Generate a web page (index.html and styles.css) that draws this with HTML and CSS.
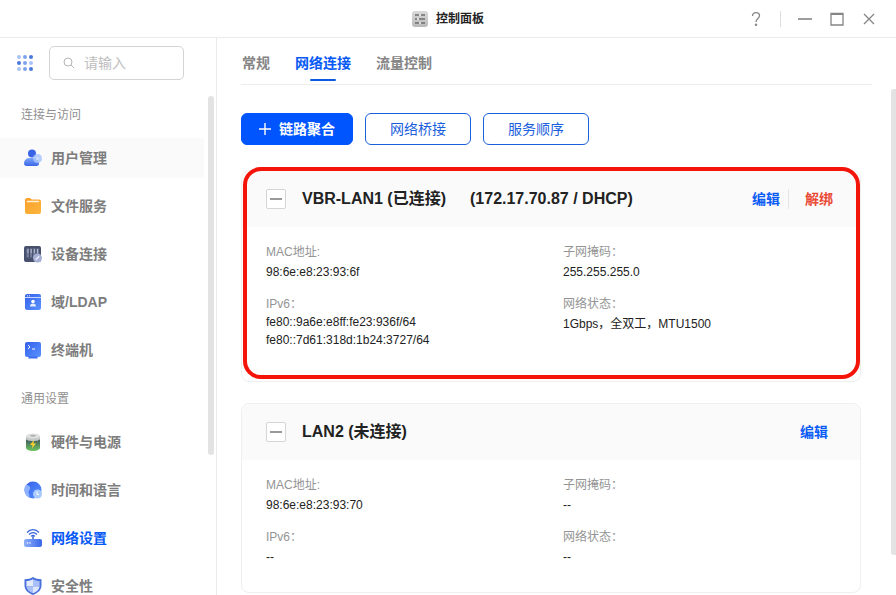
FILE: index.html
```html
<!DOCTYPE html>
<html lang="zh-CN">
<head>
    <meta charset="UTF-8">
    <meta name="viewport" content="width=device-width, initial-scale=1.0">
    <title>控制面板</title>
    <link rel="stylesheet" href="styles.css">
</head>
<body>
    <!-- Shared gradients for the sidebar icons -->
    <svg class="defs" width="0" height="0" aria-hidden="true">
        <defs>
            <linearGradient id="blue" x1="0" y1="0" x2="1" y2="1">
                <stop offset="0" stop-color="#3460ea"/>
                <stop offset="1" stop-color="#5b93ff"/>
            </linearGradient>
            <linearGradient id="blueSoft" x1="0" y1="0" x2="1" y2="0">
                <stop offset="0" stop-color="#8fb0fb"/>
                <stop offset="1" stop-color="#3a66e8"/>
            </linearGradient>
            <linearGradient id="userBody" x1="0" y1="0" x2="0" y2="1">
                <stop offset="0" stop-color="#7ea6fb"/>
                <stop offset="1" stop-color="#3a66e8"/>
            </linearGradient>
            <linearGradient id="orange" x1="0" y1="0" x2="1" y2="1">
                <stop offset="0" stop-color="#fba12c"/>
                <stop offset="1" stop-color="#fbb53c"/>
            </linearGradient>
            <linearGradient id="green" x1="0" y1="0" x2="0" y2="1">
                <stop offset="0.3" stop-color="#47625f"/>
                <stop offset="1" stop-color="#6cc860"/>
            </linearGradient>
            <linearGradient id="grey" x1="0" y1="0" x2="0" y2="1">
                <stop offset="0" stop-color="#dadada"/>
                <stop offset="1" stop-color="#b9b9b9"/>
            </linearGradient>
        </defs>
    </svg>

    <div class="window">
        <header class="titlebar">
            <div class="title">
                <svg width="16" height="16" viewBox="0 0 16 16" aria-hidden="true">
                    <rect width="16" height="16" rx="3" fill="url(#grey)"/>
                    <path d="M3 4h4M9 4h4M3 8h2M7 8h6M3 12h4M9 12h4" stroke="#6e6e6e" stroke-width="1.4"/>
                    <path d="M8 3v2M6 7v2M8 11v2" stroke="#f2f2f2" stroke-width="1"/>
                </svg>
                <h1>控制面板</h1>
            </div>
            <div class="window-buttons">
                <button type="button" class="win-btn help" aria-label="帮助">
                    <svg width="16" height="16" viewBox="0 0 16 16"><path d="M4.500 5C4.500 2.800 6 1.700 8 1.700s3.500 1.200 3.500 3.100C11.500 7.400 8 7.600 8 11"/><circle cx="8" cy="13.700" r=".6"/></svg>
                </button>
                <button type="button" class="win-btn" aria-label="最小化">
                    <svg width="16" height="16" viewBox="0 0 16 16"><path d="M1 8h14" stroke-width="1.600"/></svg>
                </button>
                <button type="button" class="win-btn" aria-label="最大化">
                    <svg width="16" height="16" viewBox="0 0 16 16"><path d="M2 2.500h12v11.500H2z"/><path d="M2 3h12" stroke-width="2"/></svg>
                </button>
                <button type="button" class="win-btn" aria-label="关闭">
                    <svg width="16" height="16" viewBox="0 0 16 16"><path d="M3 3l10 10M13 3L3 13"/></svg>
                </button>
            </div>
        </header>

        <div class="content">
            <aside class="sidebar">
                <div class="search-row">
                    <button type="button" class="apps" aria-label="全部应用">
                        <svg width="18" height="18" viewBox="0 0 18 18">
                            <g fill="#4b79dc"><circle cx="15" cy="3" r="2"/><circle cx="3" cy="9" r="2"/><circle cx="15" cy="15" r="2"/></g>
                            <g fill="#7fa3ea"><circle cx="9" cy="3" r="2"/><circle cx="9" cy="9" r="2"/><circle cx="9" cy="15" r="2"/></g>
                            <g fill="#a9c3f6"><circle cx="3" cy="3" r="2"/><circle cx="15" cy="9" r="2"/><circle cx="3" cy="15" r="2"/></g>
                        </svg>
                    </button>
                    <label class="search">
                        <svg width="12" height="12" viewBox="0 0 12 12" aria-hidden="true"><circle cx="5" cy="5" r="4"/><path d="M8 8l3 3"/></svg>
                        <input type="text" placeholder="请输入" aria-label="搜索">
                    </label>
                </div>

                <div class="nav-wrap">
                    <nav class="nav">
                        <h2 class="nav-title">连接与访问</h2>
                        <a href="#" class="nav-item hover">
                            <svg width="18" height="18" viewBox="0 0 18 18">
                                <path d="M0 14.500c0-3.500 2.500-5.500 6-5.500h3c3.500 0 6 2 6 5.500 0 1.600-1 2.500-2.500 2.500h-10C1 17 0 16.100 0 14.500z" fill="url(#userBody)"/>
                                <circle cx="8" cy="4.500" r="4" fill="#3a64e8"/>
                                <circle cx="13.500" cy="9.500" r="4.500" fill="#a9c6ff" opacity=".85"/>
                                <circle cx="13.500" cy="9.500" r="1.500" fill="#cfe0ff"/>
                            </svg>
                            <span>用户管理</span>
                        </a>
                        <a href="#" class="nav-item">
                            <svg width="18" height="18" viewBox="0 0 18 18">
                                <path d="M1 3c0-1 .8-2 2-2h3l2 1.500h7c1.200 0 2 .8 2 2V15c0 1.200-.8 2-2 2H3c-1.200 0-2-.8-2-2z" fill="url(#orange)"/>
                                <path d="M3 4.500h12" stroke="#fff1d6" stroke-width="1.500"/>
                            </svg>
                            <span>文件服务</span>
                        </a>
                        <a href="#" class="nav-item">
                            <svg width="18" height="18" viewBox="0 0 18 18">
                                <rect x="0" y="1" width="17" height="16" rx="2" fill="#47506c"/>
                                <path d="M2.500 3.500h12.500v9H2.500z" fill="#737b98"/>
                                <path d="M5.500 3.500v9M8.700 3.500v9M12 3.500v9" stroke="#414a66" stroke-width="1"/>
                                <path d="M4 4v4M7.200 4v4M10.400 4v4M13.500 4v4" stroke="#c3c9dc" stroke-width=".8"/>
                                <circle cx="13.500" cy="13" r="4.500" fill="#a5b0d4"/>
                                <path d="M11.800 14.700l3.400-3.400" stroke="#e8ecf8" stroke-width="1.500"/>
                            </svg>
                            <span>设备连接</span>
                        </a>
                        <a href="#" class="nav-item">
                            <svg width="18" height="18" viewBox="0 0 18 18">
                                <rect x="1" y="1" width="16" height="16" rx="2" fill="url(#blue)"/>
                                <path d="M1 4.500h16" stroke="#c5d7ff" stroke-width="1"/>
                                <circle cx="3.500" cy="2.800" r=".6" fill="#fff"/><circle cx="5.500" cy="2.800" r=".6" fill="#fff"/>
                                <circle cx="9" cy="8.500" r="1.800" fill="#fff"/>
                                <path d="M6 13.500c0-2 1-3 3-3s3 1 3 3z" fill="#e3ecff"/>
                            </svg>
                            <span>域/LDAP</span>
                        </a>
                        <a href="#" class="nav-item">
                            <svg width="18" height="18" viewBox="0 0 18 18">
                                <rect x="1" y="1" width="16" height="15" rx="2" fill="url(#blue)"/>
                                <path d="M5 15.500h8l1 2H4z" fill="#3f6df0"/>
                                <path d="M4 4l2 2-2 2M8 8h3" fill="none" stroke="#fff" stroke-width="1"/>
                            </svg>
                            <span>终端机</span>
                        </a>

                        <h2 class="nav-title">通用设置</h2>
                        <a href="#" class="nav-item">
                            <svg width="18" height="18" viewBox="0 0 18 18">
                                <path d="M2 3v12c0 1.500 3 3 7 3s7-1.500 7-3V3z" fill="url(#green)"/>
                                <path d="M2 3v3c0 1 3 2 7 2s7-1 7-2V3z" fill="#c5c9c7"/>
                                <ellipse cx="9" cy="3" rx="7" ry="2.500" fill="#e0e2e1"/>
                                <ellipse cx="9" cy="2.800" rx="3" ry="1" fill="#aeb2b0"/>
                                <path d="M10 7l-4 5h2.500L8 15.500l4-5H9.500z" fill="#ffd12c"/>
                            </svg>
                            <span>硬件与电源</span>
                        </a>
                        <a href="#" class="nav-item">
                            <svg width="18" height="18" viewBox="0 0 18 18">
                                <circle cx="9" cy="9" r="8.500" fill="url(#blue)"/>
                                <path d="M2 4c3 0 5 2 4 4s-2 3-1 5 0 3 0 3.500A8.500 8.500 0 0 1 2 4z" fill="#8eb2ff"/>
                                <circle cx="13.500" cy="13" r="4.500" fill="#a8caff"/>
                                <path d="M13 10.500v3h2" fill="none" stroke="#fff" stroke-width="1"/>
                            </svg>
                            <span>时间和语言</span>
                        </a>
                        <a href="#" class="nav-item active" aria-current="page">
                            <svg width="18" height="18" viewBox="0 0 18 18">
                                <rect x="0" y="10" width="18" height="8" rx="2" fill="url(#blueSoft)"/>
                                <circle cx="3.500" cy="14" r=".8" fill="#fff"/><circle cx="6" cy="14" r=".8" fill="#fff"/>
                                <path d="M9 10V6" stroke="#3b64dd" stroke-width="1.500"/>
                                <path d="M3 3.500c3.500-3.800 8.500-3.800 12 0M5 5.500c2.400-2.500 5.600-2.500 8 0M7 7.300c1.200-1.200 2.800-1.200 4 0" fill="none" stroke="#3b64dd" stroke-width="1.200"/>
                            </svg>
                            <span>网络设置</span>
                        </a>
                        <a href="#" class="nav-item">
                            <svg width="18" height="18" viewBox="0 0 18 18">
                                <path d="M9 0c2.500 1.500 5 2.200 8.500 2.300v6.200c0 4.500-3.500 7.500-8.500 9.500-5-2-8.500-5-8.500-9.500V2.300C4 2.200 6.500 1.500 9 0z" fill="#4a70dc"/>
                                <path d="M9 2.200v7.300H2.400V4C5 4 7 3.300 9 2.200z" fill="#e4ebff"/>
                                <path d="M9 2.200v7.300h6.600V4C13 4 11 3.300 9 2.200z" fill="#a9bff8"/>
                                <path d="M2.400 9.500H9v6.800c-4-1.600-6.300-3.800-6.600-6.800z" fill="#a9bff8"/>
                                <path d="M15.600 9.500H9v6.800c4-1.600 6.300-3.800 6.600-6.800z" fill="#dfe7ff"/>
                            </svg>
                            <span>安全性</span>
                        </a>
                    </nav>
                    <div class="scroll-track"><div class="scroll-thumb"></div></div>
                </div>
            </aside>

            <main class="main">
                <div class="panel">
                    <nav class="tabs">
                        <a href="#" class="tab">常规</a>
                        <a href="#" class="tab active">网络连接</a>
                        <a href="#" class="tab">流量控制</a>
                    </nav>

                    <div class="toolbar">
                        <button type="button" class="btn primary">
                            <svg width="12" height="12" viewBox="0 0 12 12" aria-hidden="true"><path d="M6 0v12M0 6h12"/></svg>
                            链路聚合
                        </button>
                        <button type="button" class="btn">网络桥接</button>
                        <button type="button" class="btn">服务顺序</button>
                    </div>

                    <div class="cards">
                        <section class="card highlighted">
                            <div class="card-header">
                                <button type="button" class="collapse" aria-label="收起"></button>
                                <h3><span>VBR-LAN1 (已连接)</span><span>(172.17.70.87 / DHCP)</span></h3>
                                <div class="actions">
                                    <a href="#">编辑</a>
                                    <a href="#" class="danger">解绑</a>
                                </div>
                            </div>
                            <dl class="card-body">
                                <div class="field">
                                    <dt>MAC地址:</dt>
                                    <dd>98:6e:e8:23:93:6f</dd>
                                </div>
                                <div class="field">
                                    <dt>子网掩码：</dt>
                                    <dd>255.255.255.0</dd>
                                </div>
                                <div class="field addresses">
                                    <dt>IPv6：</dt>
                                    <dd>fe80::9a6e:e8ff:fe23:936f/64</dd>
                                    <dd>fe80::7d61:318d:1b24:3727/64</dd>
                                </div>
                                <div class="field">
                                    <dt>网络状态：</dt>
                                    <dd>1Gbps，全双工，MTU1500</dd>
                                </div>
                            </dl>
                        </section>

                        <section class="card">
                            <div class="card-header">
                                <button type="button" class="collapse" aria-label="收起"></button>
                                <h3><span>LAN2 (未连接)</span></h3>
                                <div class="actions">
                                    <a href="#">编辑</a>
                                </div>
                            </div>
                            <dl class="card-body">
                                <div class="field">
                                    <dt>MAC地址:</dt>
                                    <dd>98:6e:e8:23:93:70</dd>
                                </div>
                                <div class="field">
                                    <dt>子网掩码：</dt>
                                    <dd>--</dd>
                                </div>
                                <div class="field">
                                    <dt>IPv6：</dt>
                                    <dd>--</dd>
                                </div>
                                <div class="field">
                                    <dt>网络状态：</dt>
                                    <dd>--</dd>
                                </div>
                            </dl>
                        </section>
                    </div>
                </div>
                <div class="scroll-track"><div class="scroll-thumb"></div></div>
            </main>
        </div>
    </div>
</body>
</html>
```
FILE: styles.css
```css
* {
    margin: 0;
    padding: 0;
    box-sizing: border-box;
}
body {
    font-family: "Liberation Sans", "Noto Sans CJK SC", sans-serif;
    font-size: 14px;
    color: #222;
    background-color: #fff;
}
a {
    text-decoration: none;
    color: inherit;
}
button {
    font: inherit;
    background: none;
    border: none;
    cursor: pointer;
}
svg {
    display: block;
    flex-shrink: 0;
}
.defs {
    position: absolute;
}
.window {
    display: flex;
    flex-direction: column;
    height: 100vh;
    overflow: hidden;
}

/* Title bar */
.titlebar {
    display: grid;
    grid-template-columns: 1fr auto 1fr;
    align-items: center;
    height: 38px;
    flex-shrink: 0;
    border-bottom: 1px solid #ebebeb;
}
.title {
    grid-column: 2;
    display: flex;
    align-items: center;
    gap: 8px;
}
.title h1 {
    font-size: 12px;
    line-height: 16px;
}
.window-buttons {
    display: flex;
    justify-content: flex-end;
    gap: 16px;
    padding-right: 19px;
}
.win-btn svg {
    fill: none;
    stroke: #858585;
    stroke-width: 1.3;
}
.win-btn.help {
    padding-right: 16px;
    border-right: 1px solid #ddd;
}
.win-btn circle {
    fill: #858585;
}

.content {
    display: flex;
    flex: 1;
    min-height: 0;
}

/* Sidebar */
.sidebar {
    display: flex;
    flex-direction: column;
    width: 217px;
    flex-shrink: 0;
    border-right: 1px solid #ebebeb;
}
.search-row {
    display: flex;
    align-items: center;
    gap: 15px;
    padding: 8px 32px 16px 16px;
}
.search {
    display: flex;
    align-items: center;
    gap: 9px;
    flex: 1;
    min-width: 0;
    height: 34px;
    padding: 0 13px;
    border: 1px solid #d4d4d4;
    border-radius: 5px;
}
.search svg {
    fill: none;
    stroke: #b5b5b5;
}
.search input {
    width: 100%;
    min-width: 0;
    border: none;
    outline: none;
    font: inherit;
}
.search input::placeholder {
    color: #bdbdbd;
}
.nav-wrap {
    display: flex;
    flex: 1;
    min-height: 0;
    padding-right: 2px;
}
.nav {
    flex: 1;
    margin-right: 4px;
    overflow: hidden;
}
.nav-title {
    padding: 9px 21px 13px;
    font-size: 12px;
    font-weight: normal;
    line-height: 20px;
    color: #8f8f8f;
}
.nav-item + .nav-title {
    margin-top: 10px;
}
.nav-item {
    display: flex;
    align-items: center;
    gap: 9px;
    height: 40px;
    padding-left: 24px;
    font-weight: bold;
    line-height: 20px;
    color: #7d7d7d;
}
.nav-item + .nav-item {
    margin-top: 8px;
}
.nav-item.hover {
    background-color: #fafafa;
}
.nav-item.active {
    color: #0659f5;
}

/* Scrollbars */
.scroll-thumb {
    width: 6px;
    height: 72%;
    border-radius: 3px;
    background-color: #e3e3e3;
}

/* Main panel */
.main {
    display: flex;
    flex: 1;
    min-width: 0;
}
.main .scroll-track {
    padding-top: 51px;
}
.main .scroll-thumb {
    width: 5px;
    height: 92%;
    border-radius: 3px 0 0 3px;
}
.panel {
    flex: 1;
    min-width: 0;
    padding: 0 19px 0 24px;
}
.tabs {
    display: flex;
    gap: 25px;
    height: 47px;
    padding-left: 1px;
    border-bottom: 1px solid #ececec;
}
.tab {
    display: flex;
    flex-direction: column;
    align-items: center;
    padding-top: 15px;
    font-weight: bold;
    line-height: 20px;
    color: #858585;
}
.tab.active {
    color: #0659f5;
}
.tab.active::after {
    content: "";
    width: 26px;
    height: 2px;
    margin-top: 6px;
    border-radius: 1px;
    background-color: #0a5be0;
}
.toolbar {
    display: flex;
    gap: 12px;
    margin: 28px 0 25px;
}
.btn {
    display: flex;
    align-items: center;
    justify-content: center;
    gap: 8px;
    height: 32px;
    padding: 0 24px;
    border: 1px solid #1a60dc;
    border-radius: 6px;
    line-height: 20px;
    color: #1a60dc;
}
.btn.primary {
    padding: 0 17px;
    border-color: #0055ff;
    background-color: #0055ff;
    color: #fff;
    font-weight: bold;
}
.btn svg {
    stroke: #fff;
    stroke-width: 1.4;
}

/* Network cards */
.cards {
    display: flex;
    flex-direction: column;
    gap: 21px;
    padding-right: 11px;
}
.card {
    position: relative;
    border: 1px solid #efefef;
    border-radius: 8px;
}
.card.highlighted::after {
    content: "";
    position: absolute;
    inset: -4px 0 2px 1px;
    border: 4px solid #f5140a;
    border-radius: 18px;
    pointer-events: none;
}
.card-header {
    display: flex;
    align-items: center;
    gap: 16px;
    height: 56px;
    padding: 0 16px 0 24px;
    border-radius: 8px 8px 0 0;
    background-color: #fafafa;
}
.collapse {
    display: flex;
    align-items: center;
    justify-content: center;
    width: 20px;
    height: 20px;
    border: 1px solid #d5d5d5;
    border-radius: 2px;
    background-color: #fff;
}
.collapse::before {
    content: "";
    width: 12px;
    height: 2px;
    background-color: #999;
}
.card-header h3 {
    display: flex;
    flex: 1;
    gap: 24px;
    font-size: 16px;
    line-height: 24px;
}
.actions {
    display: flex;
    line-height: 20px;
    font-weight: bold;
    color: #0a5cf5;
}
.actions a {
    padding: 0 16px;
}
.actions a + a {
    border-left: 1px solid #e6e6e6;
}
.highlighted .actions {
    margin-right: -5px;
}
.highlighted .actions a:first-child {
    padding-right: 8px;
}
.actions .danger {
    color: #ea4a35;
}
.card-body {
    display: grid;
    grid-template-columns: 1fr 1fr;
    row-gap: 12px;
    padding: 16px 0 24px 24px;
    font-size: 12px;
}
.field dt {
    line-height: 18px;
    color: #949494;
}
.field dd {
    line-height: 22px;
}
.addresses {
    padding-bottom: 8px;
}
.addresses dd {
    line-height: 18px;
}
```
